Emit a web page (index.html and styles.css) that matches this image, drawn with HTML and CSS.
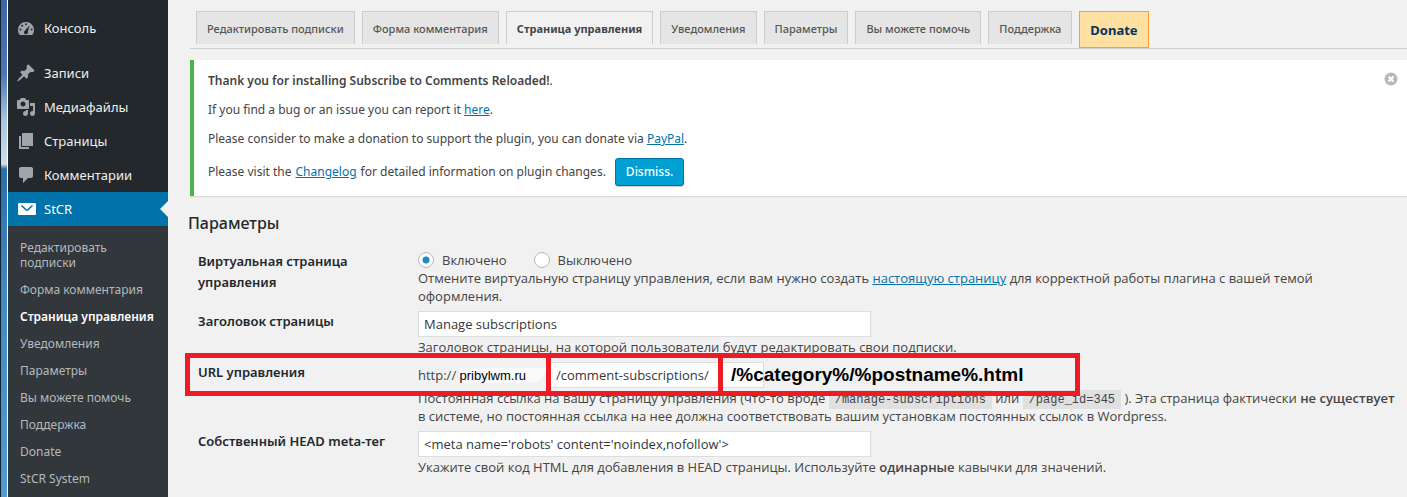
FILE: index.html
```html
<!DOCTYPE html>
<html lang="ru">
<head>
    <meta charset="UTF-8">
    <meta name="viewport" content="width=device-width, initial-scale=1.0">
    <title>StCR - Страница управления</title>
    <link rel="stylesheet" href="styles.css">
</head>
<body>
    <div class="edge"></div>
    <nav class="sidebar">
        <ul class="menu">
            <li class="first"><a href="#">
                <svg width="20" height="20" viewBox="0 0 20 20"><path fill-rule="evenodd" d="M3.8 17h12.4c1.100-1.400 1.800-3.200 1.800-5.100C18 7.500 14.400 4 10 4s-8 3.500-8 7.900c0 1.900.700 3.700 1.800 5.100zM10 5.200a1 1 0 1 1 0 2 1 1 0 0 1 0-2zM6.200 6.800a1 1 0 1 1 0 2 1 1 0 0 1 0-2zM4.400 10.600a1 1 0 1 1 0 2 1 1 0 0 1 0-2zM15.600 10.600a1 1 0 1 1 0 2 1 1 0 0 1 0-2zM13.800 7.200l-1.900 6.300c.600 1.300-.400 2.700-1.900 2.700-1.700 0-2.700-2-1.500-3.300z"/></svg>
                Консоль</a></li>
            <li><a href="#">
                <svg width="20" height="20" viewBox="0 0 20 20"><path d="M10.440 3.020l1.820-1.820 6.360 6.350-1.830 1.820c-1.050-.680-2.480-.570-3.410.360l-.750.750c-.920.930-1.040 2.350-.350 3.410l-1.830 1.820-2.410-2.410-2.800 2.790c-.420.420-3.380 2.710-3.800 2.290s1.860-3.390 2.280-3.810l2.790-2.790L4.100 9.360l1.830-1.820c1.050.690 2.480.570 3.400-.360l.750-.750c.930-.920 1.050-2.350.360-3.410z"/></svg>
                Записи</a></li>
            <li><a href="#">
                <svg width="20" height="20" viewBox="0 0 20 20"><path fill-rule="evenodd" d="M13 11V4c0-.550-.450-1-1-1h-1.670L9 1H5L3.670 3H2c-.550 0-1 .450-1 1v7c0 .550.450 1 1 1h10c.550 0 1-.450 1-1zM7 4.500c1.380 0 2.500 1.120 2.500 2.500S8.380 9.500 7 9.500 4.500 8.380 4.500 7 5.620 4.500 7 4.500zM14 6h5v10.500c0 1.380-1.120 2.500-2.500 2.500S14 17.880 14 16.500s1.120-2.500 2.500-2.500c.170 0 .340.020.500.050V9h-3V6zM10 14.050V13h2v3.500c0 1.380-1.120 2.500-2.500 2.500S7 17.880 7 16.500 8.120 14 9.500 14c.170 0 .340.020.500.050z"/></svg>
                Медиафайлы</a></li>
            <li><a href="#">
                <svg width="20" height="20" viewBox="0 0 20 20"><path d="M6 15V2h11v13H6zM5 16h8v2H3V5h2v11z"/></svg>
                Страницы</a></li>
            <li><a href="#">
                <svg width="20" height="20" viewBox="0 0 20 20"><path d="M5 2h10c1.100 0 2 .900 2 2v7c0 1.100-.900 2-2 2h-3l-5 5v-5H5c-1.100 0-2-.900-2-2V4c0-1.100.900-2 2-2z"/></svg>
                Комментарии</a></li>
            <li><a href="#" class="current">
                <svg width="20" height="20" viewBox="0 0 20 20"><rect x="2" y="4" width="18" height="12" rx="1"/><path d="M5.500 6.500l4.500 4.200q1 .800 2 0l4.500-4.200" fill="none" stroke="#0073aa" stroke-width="1.500"/></svg>
                StCR</a></li>
        </ul>
        <ul class="submenu">
            <li><a href="#">Редактировать подписки</a></li>
            <li><a href="#">Форма комментария</a></li>
            <li><a href="#" class="active">Страница управления</a></li>
            <li><a href="#">Уведомления</a></li>
            <li><a href="#">Параметры</a></li>
            <li><a href="#">Вы можете помочь</a></li>
            <li><a href="#">Поддержка</a></li>
            <li><a href="#">Donate</a></li>
            <li><a href="#">StCR System</a></li>
        </ul>
    </nav>
    <main class="content">
        <nav class="tabs">
            <a href="#">Редактировать подписки</a>
            <a href="#">Форма комментария</a>
            <a href="#" class="active">Страница управления</a>
            <a href="#">Уведомления</a>
            <a href="#">Параметры</a>
            <a href="#">Вы можете помочь</a>
            <a href="#">Поддержка</a>
            <a href="#" class="donate">Donate</a>
        </nav>

        <div class="notice">
            <div class="notice-text">
                <p><strong>Thank you for installing Subscribe to Comments Reloaded!</strong>.</p>
                <p>If you find a bug or an issue you can report it <a href="#">here</a>.</p>
                <p>Please consider to make a donation to support the plugin, you can donate via <a href="#">PayPal</a>.</p>
                <p class="last">Please visit the <a href="#">Changelog</a> for detailed information on plugin changes. <button type="button" class="dismiss">Dismiss.</button></p>
            </div>
            <button type="button" class="close" aria-label="Закрыть">
                <svg width="14" height="14" viewBox="0 0 14 14"><circle cx="7" cy="7" r="6.500" fill="#b4b9be"/><path d="M4.500 4.500l5 5M9.500 4.500l-5 5" stroke="#fff" stroke-width="2.200"/></svg>
            </button>
        </div>

        <h3>Параметры</h3>
        <form class="form">
            <div class="row">
                <span class="label" id="virtual">Виртуальная страница управления</span>
                <div class="field">
                    <div class="radios" role="radiogroup" aria-labelledby="virtual">
                        <label><input type="radio" name="virtual" checked>Включено</label>
                        <label><input type="radio" name="virtual">Выключено</label>
                    </div>
                    <p>Отмените виртуальную страницу управления, если вам нужно создать <a href="#">настоящую страницу</a> для корректной работы плагина с вашей темой оформления.</p>
                </div>
            </div>
            <div class="row">
                <label class="label" for="title">Заголовок страницы</label>
                <div class="field">
                    <input type="text" id="title" value="Manage subscriptions">
                    <p>Заголовок страницы, на которой пользователи будут редактировать свои подписки.</p>
                </div>
            </div>
            <div class="row url-row">
                <label class="label" for="url">URL управления</label>
                <div class="field">
                    <div class="url">
                        <span class="host">http:// <span class="domain">pribylwm.ru</span></span>
                        <input type="text" id="url" value="/comment-subscriptions/">
                    </div>
                    <p>Постоянная ссылка на вашу страницу управления (что-то вроде <code>/manage-subscriptions</code> или <code>/page_id=345</code> ). Эта страница фактически <b>не существует</b> в системе, но постоянная ссылка на нее должна соответствовать вашим установкам постоянных ссылок в Wordpress.</p>
                </div>
                <div class="mark">
                    <div class="mark-inner"></div>
                    <span class="mark-text">/%category%/%postname%.html</span>
                </div>
            </div>
            <div class="row">
                <label class="label" for="meta">Собственный HEAD meta-тег</label>
                <div class="field">
                    <input type="text" id="meta" value="&lt;meta name='robots' content='noindex,nofollow'&gt;">
                    <p>Укажите свой код HTML для добавления в HEAD страницы. Используйте <b>одинарные</b> кавычки для значений.</p>
                </div>
            </div>
        </form>
    </main>
</body>
</html>
```
FILE: styles.css
```css
* {
    box-sizing: border-box;
}
body {
    display: flex;
    margin: 0;
    min-height: 100vh;
    background: #f1f1f1;
    color: #444;
    font-family: "Noto Sans", "Open Sans", sans-serif;
    font-size: 13px;
}
p, ul, h3 {
    margin: 0;
    padding: 0;
}
ul {
    list-style: none;
}
a {
    color: #0073aa;
}
.edge {
    width: 8px;
    border-left: 1px solid #16202e;
    border-right: 1px solid #fff;
    background: linear-gradient(#3b66a8 0, #4a78b4 15%, #a8c4dc 24%, #cfe0ec 33%, #2a70ac 34%, #3f8cc4 60%, #4f9cd0 100%);
}

/* Sidebar */
.sidebar {
    display: flex;
    flex-direction: column;
    flex-shrink: 0;
    width: 160px;
    background: #23282d;
}
.menu {
    padding-top: 11px;
}
.menu .first {
    margin-bottom: 11px;
}
.menu a {
    display: flex;
    align-items: center;
    gap: 8px;
    height: 34px;
    padding-left: 8px;
    color: #eee;
    font-size: 13px;
    text-decoration: none;
}
.menu svg {
    fill: #a0a5aa;
}
.menu .current {
    position: relative;
    background: #0073aa;
    color: #fff;
}
.menu .current svg {
    fill: #fff;
}
.menu .current::after {
    content: "";
    position: absolute;
    right: 0;
    top: 9px;
    border: 8px solid transparent;
    border-left: 0;
    border-right-color: #f1f1f1;
}
.submenu {
    flex: 1;
    padding: 8px 0 4px;
    background: #32373c;
}
.submenu a {
    display: block;
    padding: 6px 12px;
    color: #b4b9be;
    font-size: 12px;
    line-height: 15px;
    text-decoration: none;
}
.submenu .active {
    padding-right: 0;
    color: #fff;
    font-weight: 600;
}

/* Tabs */
.content {
    flex: 1;
    min-width: 0;
    padding-top: 11px;
}
.tabs {
    display: flex;
    gap: 7px;
    height: 38px;
    margin-left: 22px;
    padding-left: 6px;
    border-bottom: 1px solid #ccc;
}
.tabs a {
    height: 33px;
    padding: 0 10px;
    border: 1px solid #ccc;
    border-bottom: 0;
    background: #e5e5e5;
    color: #555;
    font-size: 11px;
    font-weight: 500;
    line-height: 34px;
    text-decoration: none;
    white-space: nowrap;
}
.tabs .active {
    background: #f1f1f1;
    color: #444;
    font-weight: 700;
}
.tabs .donate {
    height: 37px;
    border: 1px solid #ff9d35;
    background: #ffe0a3;
    color: #08315c;
    font-size: 13px;
    font-weight: 700;
    line-height: 37px;
}

/* Notice */
.notice {
    display: flex;
    align-items: flex-start;
    margin: 11px 0 15px 22px;
    padding: 11px 9px 10px 14px;
    border-left: 4px solid #46b450;
    background: #fff;
    box-shadow: 0 1px 1px rgba(0, 0, 0, 0.1);
    font-size: 12px;
}
.notice-text {
    flex: 1;
}
.notice p {
    margin-bottom: 9px;
    line-height: 20px;
}
.notice strong {
    font-weight: 600;
}
.notice .last {
    display: flex;
    align-items: center;
    gap: 4px;
    margin: 0;
}
.dismiss {
    height: 28px;
    margin-left: 5px;
    padding: 0 10px;
    border: 1px solid #0073aa;
    border-radius: 3px;
    background: #00a0d2;
    box-shadow: 0 1px 0 #ccc;
    color: #fff;
    font: inherit;
    font-weight: 500;
    cursor: pointer;
}
.close {
    display: flex;
    padding: 1px 0;
    border: 0;
    background: none;
    cursor: pointer;
}

/* Options form */
h3 {
    margin: 0 0 16px 20px;
    color: #23282d;
    font-size: 16px;
    font-weight: 500;
    line-height: 24px;
}
.form {
    display: flex;
    flex-direction: column;
    gap: 6px;
    padding-left: 30px;
    font-family: "Open Sans", "Noto Sans", sans-serif;
}
.row {
    display: grid;
    grid-template-columns: 180px 1fr;
    column-gap: 40px;
    line-height: 18px;
}
.label {
    color: #23282d;
    font-family: "Noto Sans", "Open Sans", sans-serif;
    font-weight: 600;
    line-height: 21px;
    white-space: nowrap;
}
#virtual {
    white-space: normal;
}
.field p {
    padding-right: 8px;
}
.field b {
    font-weight: 600;
}
.radios {
    display: flex;
    gap: 27px;
}
.radios label {
    display: flex;
    align-items: center;
    gap: 8px;
    height: 18px;
}
input[type="radio"] {
    appearance: none;
    width: 16px;
    height: 16px;
    margin: 0;
    border: 1px solid #b4b9be;
    border-radius: 50%;
    background: #fff;
}
input[type="radio"]:checked {
    background: radial-gradient(circle, #1e8cbe 3px, #fff 4px);
}
input[type="text"] {
    display: block;
    width: 453px;
    max-width: 100%;
    height: 26px;
    margin-bottom: 1px;
    padding: 0 5px;
    border: 1px solid #ddd;
    background: #fff;
    color: #32373c;
    font: inherit;
}
.url {
    display: flex;
}
.host {
    width: 132px;
    height: 27px;
    line-height: 27px;
}
.domain {
    padding: 0 20px 0 0;
    border-radius: 0 0 20px 0;
    background: #fafafa;
    color: #000;
    font-family: "Liberation Sans", sans-serif;
}
.url input[type="text"] {
    width: 214px;
}
code {
    padding: 3px 6px 2px;
    background: rgba(0, 0, 0, 0.07);
    font-family: "Liberation Mono", monospace;
    font-size: 12px;
    line-height: 14px;
}

/* Red highlight drawn over the URL row */
.url-row {
    position: relative;
}
.mark {
    position: absolute;
    top: -9px;
    left: -13px;
    display: flex;
    width: 895px;
    height: 43px;
    border: 5px solid #ed1c24;
    pointer-events: none;
}
.mark-inner {
    width: 177px;
    margin-left: 356px;
    border: solid #ed1c24;
    border-width: 0 5px;
}
.mark-text {
    margin-left: 8px;
    color: #000;
    font-family: "Liberation Sans", sans-serif;
    font-size: 19px;
    font-weight: 700;
    line-height: 34px;
}
```
